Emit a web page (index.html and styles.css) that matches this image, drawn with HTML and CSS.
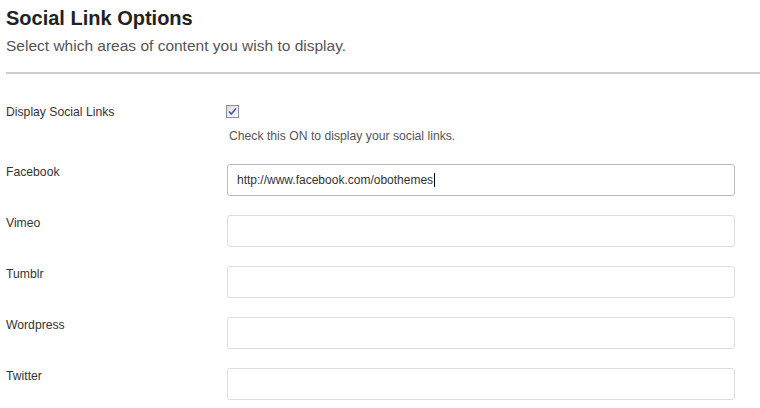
FILE: index.html
```html
<!DOCTYPE html>
<html>
<head>
<meta charset="utf-8">
<link rel="stylesheet" href="styles.css">
</head>
<body>
<div class="page">
  <div class="header">
    <h2 class="title">Social Link Options</h2>
    <p class="subtitle">Select which areas of content you wish to display.</p>
  </div>
  <div class="rule"></div>
  <div class="row row-check">
    <div class="label">Display Social Links</div>
    <div class="field">
      <span class="checkbox">
        <svg width="9" height="9" viewBox="0 0 9 9"><path d="M1 4.5 L3.3 7 L8 1.5" fill="none" stroke="#3d5ea8" stroke-width="1.6"/></svg>
      </span>
      <div class="desc">Check this ON to display your social links.</div>
    </div>
  </div>
  <div class="row">
    <div class="label">Facebook</div>
    <div class="field"><div class="input focused">http://www.facebook.com/obothemes<span class="caret"></span></div></div>
  </div>
  <div class="row">
    <div class="label">Vimeo</div>
    <div class="field"><div class="input"></div></div>
  </div>
  <div class="row">
    <div class="label">Tumblr</div>
    <div class="field"><div class="input"></div></div>
  </div>
  <div class="row">
    <div class="label">Wordpress</div>
    <div class="field"><div class="input"></div></div>
  </div>
  <div class="row">
    <div class="label">Twitter</div>
    <div class="field"><div class="input"></div></div>
  </div>
</div>
</body>
</html>
```
FILE: styles.css
```css
html, body {
  margin: 0;
  padding: 0;
  background: #fff;
}
body {
  font-family: "Liberation Sans", Arial, sans-serif;
  color: #333;
}
.page {
  padding: 6px 0 0 6px;
}
.title {
  margin: 0;
  font-size: 20px;
  line-height: 24px;
  font-weight: bold;
  color: #222;
}
.subtitle {
  margin: 6px 0 0 0;
  font-size: 15.5px;
  line-height: 20px;
  color: #555;
}
.rule {
  height: 2px;
  background: #ccc;
  margin-top: 16px;
}
.row {
  display: flex;
  margin-bottom: 19px;
}
.row-check {
  margin-top: 31px;
  margin-bottom: 21px;
}
.label {
  width: 221px;
  flex: none;
  font-size: 12.2px;
  line-height: 14px;
  color: #333;
  padding-top: 1px;
}
.row-check .label {
  padding-top: 0;
}
.field {
  flex: none;
  width: 508px;
}
.checkbox {
  display: flex;
  align-items: center;
  justify-content: center;
  box-sizing: border-box;
  width: 13px;
  height: 13px;
  margin-left: -1px;
  border: 1px solid #8f8f9d;
  background: linear-gradient(135deg, #dcdcdc, #fafafa);
}
.desc {
  margin-top: 11px;
  margin-left: 2px;
  font-size: 12.2px;
  line-height: 14px;
  color: #555;
}
.input {
  box-sizing: border-box;
  height: 32px;
  border: 1px solid #ddd;
  border-radius: 3px;
  padding: 0 0 0 9px;
  font-size: 12px;
  line-height: 30px;
  color: #333;
}
.input.focused {
  border-color: #bbb;
}
.caret {
  display: inline-block;
  width: 1px;
  height: 14px;
  background: #000;
  vertical-align: -3px;
  margin-left: 1px;
}
```
